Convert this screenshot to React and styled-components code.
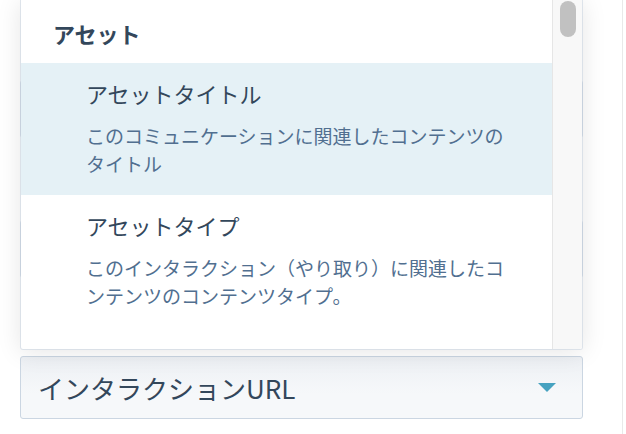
import React from "react";
import styled, { createGlobalStyle } from "styled-components";

const GlobalStyle = createGlobalStyle`
  html, body {
    margin: 0;
    padding: 0;
    background: #ffffff;
  }
  body {
    font-family: "Noto Sans CJK JP", "Noto Sans", sans-serif;
    color: #33475b;
  }
`;

const options = [
  {
    title: "アセットタイトル",
    desc: "このコミュニケーションに関連したコンテンツのタイトル",
    active: true,
  },
  {
    title: "アセットタイプ",
    desc: "このインタラクション（やり取り）に関連したコンテンツのコンテンツタイプ。",
  },
];

const Page = styled.div`
  position: relative;
  width: 622px;
  height: 434px;
  border-right: 1px solid #e9e9e9;
  overflow: hidden;
`;

const Form = styled.div`
  display: flex;
  flex-direction: column;
  padding-left: 20px;
`;

const Field = styled.div`
  width: 563px;
  height: ${(p) => p.h}px;
  margin-top: ${(p) => p.mt}px;
  box-sizing: border-box;
  border: 1px solid #cbd6e2;
  border-radius: 3px;
  background: #f5f8fa;
`;

const Select = styled.div`
  width: 563px;
  height: 63px;
  margin-top: 78px;
  box-sizing: border-box;
  border: 1px solid #cbd6e2;
  border-radius: 3px;
  background: linear-gradient(#edf0f4, #f6f8fa 60%);
  display: flex;
  align-items: center;
  justify-content: space-between;
  padding: 0 26px 0 17px;
  font-size: 26px;
  color: #33475b;
`;

/* dropdown opened over the form */
const Popover = styled.div`
  position: absolute;
  top: 0;
  left: 20px;
  width: 563px;
  height: 350px;
  box-sizing: border-box;
  display: flex;
  background: #ffffff;
  background-clip: padding-box;
  border: 1px solid rgba(203, 214, 226, 0.6);
  border-top: none;
  border-radius: 0 0 3px 3px;
  box-shadow: 0 2px 24px rgba(0, 0, 0, 0.1);
  overflow: hidden;
`;

const List = styled.div`
  flex: 1;
  overflow: hidden;
`;

const GroupLabel = styled.div`
  height: 63px;
  box-sizing: border-box;
  padding: 22px 0 0 32px;
  font-size: 22px;
  line-height: 22px;
  font-weight: 700;
  color: #33475b;
`;

const Option = styled.div`
  box-sizing: border-box;
  height: 132px;
  padding: 15px 40px 0 65px;
  background: ${(p) => (p.active ? "#e5f1f6" : "#ffffff")};
`;

const OptionTitle = styled.div`
  font-size: 22px;
  line-height: 30px;
  color: #33475b;
`;

const OptionDesc = styled.div`
  margin-top: 14px;
  max-width: 425px;
  font-size: 19px;
  line-height: 28px;
  line-break: anywhere;
  color: #516f90;
`;

const Track = styled.div`
  width: 29px;
  flex-shrink: 0;
  border-left: 1px solid #e6e6e6;
  background: #f8f8f8;
`;

const Thumb = styled.div`
  width: 16px;
  height: 36px;
  margin: 1px 0 0 7px;
  border-radius: 8px;
  background: #c1c1c1;
`;

const Caret = () => (
  <svg width="18" height="9" viewBox="0 0 18 9">
    <polygon points="0,0 18,0 9,9" fill="#46a2c0" />
  </svg>
);

export default function App() {
  return (
    <>
      <GlobalStyle />
      <Page>
        <Form>
          <Field mt={80} h={58} />
          <Field mt={82} h={58} />
          <Select>
            <span>インタラクションURL</span>
            <Caret />
          </Select>
        </Form>
        <Popover>
          <List>
            <GroupLabel>アセット</GroupLabel>
            {options.map((o) => (
              <Option key={o.title} active={o.active}>
                <OptionTitle>{o.title}</OptionTitle>
                <OptionDesc>{o.desc}</OptionDesc>
              </Option>
            ))}
          </List>
          <Track>
            <Thumb />
          </Track>
        </Popover>
      </Page>
    </>
  );
}
